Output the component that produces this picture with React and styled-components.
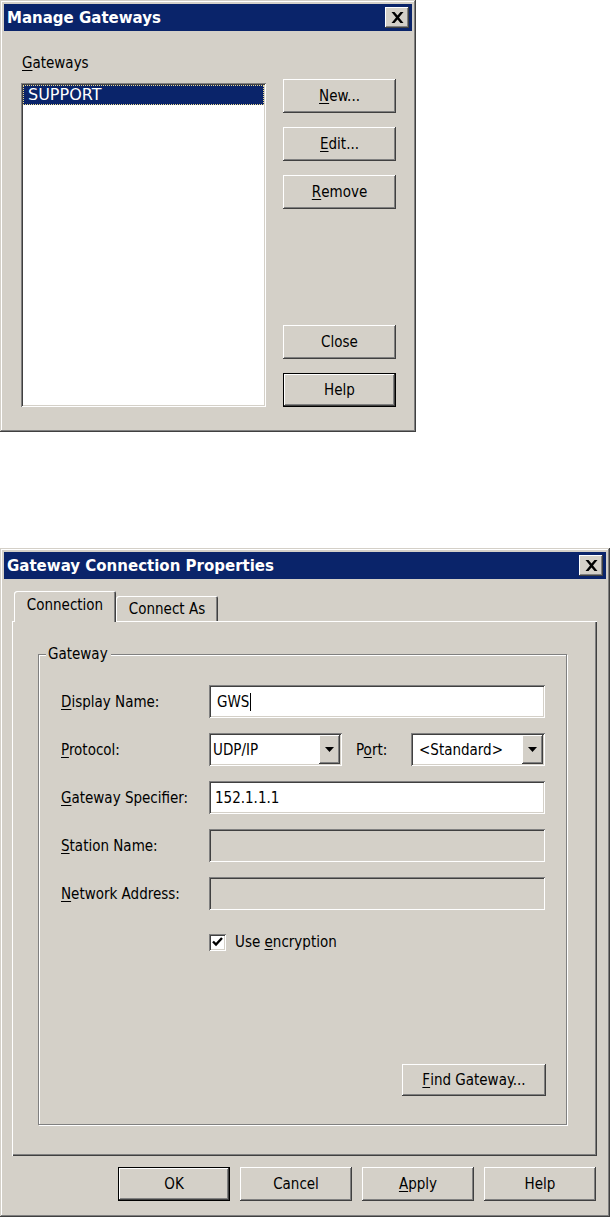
import React from 'react';
import styled, { createGlobalStyle, css } from 'styled-components';

const FACE = '#d4d0c8';
const NAVY = '#0a246a';

const GlobalStyle = createGlobalStyle`
  html, body {
    margin: 0;
    padding: 0;
    background: #ffffff;
  }
  body {
    font-family: "DejaVu Sans Condensed", "DejaVu Sans", sans-serif;
    font-stretch: condensed;
    font-size: 15px;
    color: #000;
  }
`;

const raised = css`
  box-shadow:
    inset -1px -1px 0 #404040,
    inset 1px 1px 0 #ffffff,
    inset -2px -2px 0 #808080,
    inset 2px 2px 0 ${FACE};
`;

const sunken = css`
  box-shadow:
    inset 1px 1px 0 #808080,
    inset -1px -1px 0 #ffffff,
    inset 2px 2px 0 #404040,
    inset -2px -2px 0 ${FACE};
`;

const Page = styled.div`
  display: flex;
  flex-direction: column;
  align-items: flex-start;
`;

const Window = styled.div`
  box-sizing: border-box;
  width: ${({ $w }) => $w}px;
  height: ${({ $h }) => $h}px;
  margin-top: ${({ $top }) => $top || 0}px;
  padding: 4px;
  background: ${FACE};
  display: flex;
  flex-direction: column;
  box-shadow:
    inset -1px -1px 0 #404040,
    inset 1px 1px 0 ${FACE},
    inset -2px -2px 0 #808080,
    inset 2px 2px 0 #ffffff;
`;

const TitleBar = styled.div`
  height: 27px;
  flex: none;
  background: ${NAVY};
  color: #fff;
  display: flex;
  align-items: center;
  justify-content: space-between;
  padding-left: 3px;
`;

const TitleText = styled.span`
  font-family: "DejaVu Sans", sans-serif;
  font-stretch: normal;
  font-weight: bold;
  font-size: ${({ $size }) => $size || 15}px;
  white-space: nowrap;
`;

const CloseBox = styled.div`
  width: 24px;
  height: 21px;
  margin-right: 3px;
  background: ${FACE};
  display: flex;
  align-items: center;
  justify-content: center;
  ${raised}
`;

const CloseButton = () => (
  <CloseBox>
    <svg width="13" height="11" viewBox="0 0 13 11">
      <path
        d="M0.5 0 L3.5 0 L6.5 3.6 L9.5 0 L12.5 0 L8 5.5 L12.5 11 L9.5 11 L6.5 7.4 L3.5 11 L0.5 11 L5 5.5 Z"
        fill="#000"
      />
    </svg>
  </CloseBox>
);

const Button = styled.div`
  box-sizing: border-box;
  width: ${({ $w }) => $w || 112}px;
  height: ${({ $h }) => $h || 34}px;
  flex: none;
  background: ${FACE};
  display: flex;
  align-items: center;
  justify-content: center;
  white-space: nowrap;
  ${({ $default }) =>
    $default
      ? css`
          box-shadow:
            inset 0 0 0 1px #000,
            inset -2px -2px 0 #404040,
            inset 2px 2px 0 #ffffff,
            inset -3px -3px 0 #808080;
        `
      : raised}
`;

/* ---------- Manage Gateways ---------- */

const ManageBody = styled.div`
  flex: 1;
  display: flex;
  gap: 17px;
  padding: 22px 0 21px 17px;
`;

const ListColumn = styled.div`
  display: flex;
  flex-direction: column;
  width: 245px;
`;

const Caption = styled.div`
  height: 20px;
  line-height: 20px;
  margin-bottom: 10px;
  padding-left: 1px;
`;

const ListBox = styled.div`
  flex: 1;
  background: #fff;
  padding: 2px;
  ${sunken}
`;

const ListItem = styled.div`
  height: 20px;
  line-height: 20px;
  padding-left: 5px;
  font-family: "DejaVu Sans", sans-serif;
  font-stretch: normal;
  font-size: 16px;
  background: ${({ $selected }) => ($selected ? NAVY : 'transparent')};
  color: ${({ $selected }) => ($selected ? '#fff' : '#000')};
  outline: ${({ $selected }) => ($selected ? '1px dotted #e8d890' : 'none')};
  outline-offset: -1px;
`;

const ButtonColumn = styled.div`
  display: flex;
  flex-direction: column;
  padding-top: 26px;
  gap: 14px;
`;

const Push = styled.div`
  flex: 1;
`;

/* ---------- Gateway Connection Properties ---------- */

const PropsBody = styled.div`
  flex: 1;
  display: flex;
  flex-direction: column;
  padding: 12px 9px 12px 8px;
`;

const TabStrip = styled.div`
  height: 30px;
  display: flex;
  align-items: flex-end;
  padding-left: 2px;
  position: relative;
  z-index: 1;
`;

const Tab = styled.div`
  box-sizing: border-box;
  width: ${({ $w }) => $w}px;
  height: ${({ $active }) => ($active ? 31 : 25)}px;
  margin-bottom: ${({ $active }) => ($active ? -1 : 0)}px;
  background: ${FACE};
  display: flex;
  align-items: ${({ $active }) => ($active ? 'flex-start' : 'center')};
  justify-content: center;
  padding-top: ${({ $active }) => ($active ? 5 : 0)}px;
  border-top-left-radius: 3px;
  border-top-right-radius: 2px;
  box-shadow:
    inset 1px 1px 0 #ffffff,
    inset -1px 0 0 #404040,
    inset -2px 0 0 #808080;
`;

const Panel = styled.div`
  height: 535px;
  box-sizing: border-box;
  padding: 33px 30px 0 26px;
  box-shadow:
    inset 1px 1px 0 #ffffff,
    inset -1px -1px 0 #404040,
    inset -2px -2px 0 #808080;
`;

const Group = styled.fieldset`
  box-sizing: border-box;
  width: 529px;
  height: 480px;
  margin: -9px 0 0 0;
  padding: 22px 20px 28px 22px;
  border: 1px solid #808080;
  box-shadow: 1px 1px 0 #ffffff, inset 1px 1px 0 #ffffff;
  display: flex;
  flex-direction: column;
`;

const Legend = styled.legend`
  margin-left: -15px;
  padding: 0 3px 0 2px;
  line-height: 18px;
  background: ${FACE};
`;

const FormGrid = styled.div`
  display: grid;
  grid-template-columns: 148px 336px;
  grid-auto-rows: 33px;
  row-gap: 15px;
  align-items: center;
`;

const FieldLabel = styled.div`
  white-space: nowrap;
`;

const TextBox = styled.div`
  box-sizing: border-box;
  height: 33px;
  display: flex;
  align-items: center;
  padding-left: ${({ $pad }) => $pad || 6}px;
  background: ${({ $disabled }) => ($disabled ? FACE : '#fff')};
  ${sunken}
`;

const Caret = styled.span`
  width: 1px;
  height: 18px;
  background: #000;
  margin-left: 1px;
`;

const ComboRow = styled.div`
  display: flex;
  align-items: center;
`;

const Combo = styled.div`
  box-sizing: border-box;
  width: ${({ $w }) => $w}px;
  height: 33px;
  display: flex;
  align-items: center;
  padding: 2px;
  background: #fff;
  ${sunken}
`;

const ComboText = styled.span`
  flex: 1;
  padding-left: ${({ $pad }) => $pad}px;
`;

const ArrowBox = styled.div`
  width: 21px;
  height: 100%;
  background: ${FACE};
  display: flex;
  align-items: center;
  justify-content: center;
  ${raised}
`;

const Arrow = () => (
  <ArrowBox>
    <svg width="9" height="5" viewBox="0 0 9 5">
      <path d="M0 0 H9 L4.5 5 Z" fill="#000" />
    </svg>
  </ArrowBox>
);

const PortLabel = styled.span`
  flex: 1;
  padding-left: 14px;
`;

const CheckRow = styled.div`
  display: flex;
  align-items: center;
  gap: 9px;
  margin: 23px 0 0 148px;
`;

const CheckBox = styled.div`
  box-sizing: border-box;
  width: 17px;
  height: 17px;
  background: #fff;
  display: flex;
  align-items: center;
  justify-content: center;
  ${sunken}
`;

const FindRow = styled.div`
  margin-top: auto;
  display: flex;
  justify-content: flex-end;
`;

const Actions = styled.div`
  display: flex;
  justify-content: flex-end;
  gap: 10px;
  margin-top: 11px;
  padding-right: 1px;
`;

const Key = styled.u`
  text-decoration-thickness: 1px;
  text-underline-offset: 2px;
`;

export default function App() {
  return (
    <Page>
      <GlobalStyle />

      <Window $w={416} $h={432}>
        <TitleBar>
          <TitleText>Manage Gateways</TitleText>
          <CloseButton />
        </TitleBar>
        <ManageBody>
          <ListColumn>
            <Caption>
              <Key>G</Key>ateways
            </Caption>
            <ListBox>
              <ListItem $selected>SUPPORT</ListItem>
            </ListBox>
          </ListColumn>
          <ButtonColumn>
            <Button $w={113}>
              <Key>N</Key>ew...
            </Button>
            <Button $w={113}>
              <Key>E</Key>dit...
            </Button>
            <Button $w={113}>
              <Key>R</Key>emove
            </Button>
            <Push />
            <Button $w={113}>Close</Button>
            <Button $w={113} $default>
              Help
            </Button>
          </ButtonColumn>
        </ManageBody>
      </Window>

      <Window $w={610} $h={669} $top={116}>
        <TitleBar>
          <TitleText>Gateway Connection Properties</TitleText>
          <CloseButton />
        </TitleBar>
        <PropsBody>
          <TabStrip>
            <Tab $w={102} $active>
              Connection
            </Tab>
            <Tab $w={102}>Connect As</Tab>
          </TabStrip>
          <Panel>
            <Group>
              <Legend>Gateway</Legend>
              <FormGrid>
                <FieldLabel>
                  <Key>D</Key>isplay Name:
                </FieldLabel>
                <TextBox $pad={8}>
                  GWS
                  <Caret />
                </TextBox>

                <FieldLabel>
                  <Key>P</Key>rotocol:
                </FieldLabel>
                <ComboRow>
                  <Combo $w={133}>
                    <ComboText $pad={2}>UDP/IP</ComboText>
                    <Arrow />
                  </Combo>
                  <PortLabel>
                    P<Key>o</Key>rt:
                  </PortLabel>
                  <Combo $w={134}>
                    <ComboText $pad={6}>&lt;Standard&gt;</ComboText>
                    <Arrow />
                  </Combo>
                </ComboRow>

                <FieldLabel>
                  <Key>G</Key>ateway Specifier:
                </FieldLabel>
                <TextBox $pad={6}>152.1.1.1</TextBox>

                <FieldLabel>
                  <Key>S</Key>tation Name:
                </FieldLabel>
                <TextBox $disabled />

                <FieldLabel>
                  <Key>N</Key>etwork Address:
                </FieldLabel>
                <TextBox $disabled />
              </FormGrid>

              <CheckRow>
                <CheckBox>
                  <svg width="11" height="10" viewBox="0 0 11 10">
                    <path d="M1 4.5 L4 7.5 L10 1" stroke="#000" strokeWidth="2.4" fill="none" />
                  </svg>
                </CheckBox>
                <span>
                  Use <Key>e</Key>ncryption
                </span>
              </CheckRow>

              <FindRow>
                <Button $w={144} $h={32}>
                  <Key>F</Key>ind Gateway...
                </Button>
              </FindRow>
            </Group>
          </Panel>
          <Actions>
            <Button $default>OK</Button>
            <Button>Cancel</Button>
            <Button>
              <Key>A</Key>pply
            </Button>
            <Button>Help</Button>
          </Actions>
        </PropsBody>
      </Window>
    </Page>
  );
}
